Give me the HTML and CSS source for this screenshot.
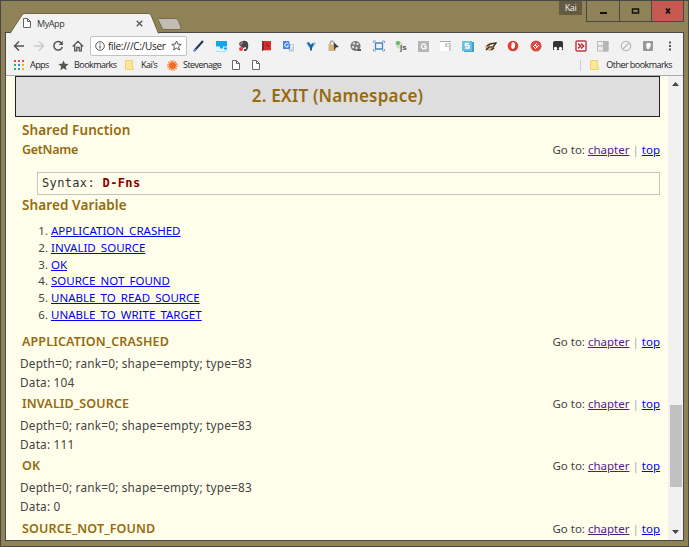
FILE: index.html
```html
<!DOCTYPE html>
<html lang="en">
<head>
<meta charset="utf-8">
<title>MyApp</title>
<link rel="stylesheet" href="styles.css">
</head>
<body>
<div class="window">
  <header class="titlebar">
    <svg class="tabshape" width="180" height="21" viewBox="0 0 180 21"><path d="M0 20.500L12 2Q13 .5 15 .5H138Q140 .5 141 2L148.500 20.500" fill="#f2f2f2" stroke="#6e6543"/><path d="M148 6.500Q148 5.500 149 5.500H165Q167 5.500 168 7L171 14Q171 16.500 169 16.500H155Q153 16.500 152 15Z" fill="#c1bdb2" stroke="#756c50"/></svg>
    <div class="tab">
      <svg width="8" height="10" viewBox="0 0 8 10"><path d="M.5.5H4.500L7.500 3.500V9.500H.5ZM4.500.5V3.500H7.500" fill="#fff" stroke="#666"/></svg>
      <span class="tabtext">MyApp</span>
      <svg class="close" width="7" height="7" viewBox="0 0 7 7"><path d="M.7.7L6.300 6.300M6.300.7L.7 6.300" stroke="#555" stroke-width="1.300"/></svg>
    </div>
    <span class="user">Kai</span>
    <div class="controls">
      <span><svg width="10" height="10"><path d="M2 7h7" stroke="#111" stroke-width="2"/></svg></span>
      <span><svg width="10" height="10"><rect x="2.500" y="3" width="6" height="4" fill="none" stroke="#111" stroke-width="1.500"/></svg></span>
      <span class="shut"><svg width="10" height="10"><path d="M3 2.500L7 7.500M7 2.500L3 7.500" stroke="#111" stroke-width="1.800"/></svg></span>
    </div>
  </header>
  <div class="inner">
    <div class="toolbar">
      <div class="nav">
        <svg viewBox="0 0 12 12"><path d="M11 6H2M6 1.500L1.500 6L6 10.500" fill="none" stroke="#555" stroke-width="1.500"/></svg>
        <svg viewBox="0 0 12 12"><path d="M1 6H10M6 1.500L10.500 6L6 10.500" fill="none" stroke="#ccc" stroke-width="1.500"/></svg>
        <svg viewBox="0 0 12 12"><path d="M9.600 3.200A4.300 4.300 0 1 0 10.300 7" fill="none" stroke="#555" stroke-width="1.500"/><path d="M10.800 .8V5H6.700Z" fill="#555"/></svg>
        <svg viewBox="0 0 12 12"><path d="M.7 6.500L6 1.300L11.300 6.500M2.700 5V10.800H4.800V7.500H7.200V10.800H9.300V5" fill="none" stroke="#555" stroke-width="1.300"/></svg>
      </div>
      <div class="address">
        <svg width="10" height="10" viewBox="0 0 10 10"><circle cx="5" cy="5" r="4.300" fill="none" stroke="#555"/><path d="M5 4.500V7.500M5 2.300V3.500" stroke="#555" stroke-width="1.200"/></svg>
        <span class="url">file:///C:/User</span>
        <svg width="11" height="11" viewBox="0 0 11 11"><path d="M5.500 1L6.800 4.100L10.200 4.400L7.600 6.600L8.400 9.900L5.500 8.100L2.600 9.900L3.400 6.600L.8 4.400L4.200 4.100Z" fill="none" stroke="#555"/></svg>
      </div>
      <div class="extensions">
        <svg viewBox="0 0 12 12"><path d="M1.500 10.500L10 1" stroke="#273050" stroke-width="2"/><path d="M0 11L4 9.500M1 11.500L2.500 9" stroke="#668ff0" stroke-width="1.300"/></svg>
        <svg viewBox="0 0 12 12"><path d="M0 1H11V11.500H0Z" fill="#12a6e8"/><path d="M0 6.500H4V8.500H7V6.500H11V7.500H8V9.500H11V11.500H0Z" fill="#dff6ff"/></svg>
        <svg viewBox="0 0 12 12"><path d="M1 3L4 1Q9 0 10 3Q11 9 8 11H6V9H8V7L5 8L1 5Z" fill="#4b4748"/><path d="M1 4H4V1" fill="none" stroke="#aaa"/><circle cx="3" cy="9" r="2" fill="#f13b40"/></svg>
        <svg viewBox="0 0 12 12"><path d="M1 1H10V11H1Z" fill="#d8302f"/><path d="M1 1H3V11H1Z" fill="#8b2726"/><path d="M2 10.500H10" stroke="#d8bcaa"/><path d="M5 7L6.500 3L8 7M5.500 5.700H7.500" stroke="#a22" fill="none"/></svg>
        <svg viewBox="0 0 12 12"><path d="M4 4H11V11.500H6Z" fill="#c5c9cf"/><path d="M0 1H6L8 9H0Z" fill="#4285e8"/><path d="M5.500 4A2 2 0 1 0 5.500 6H4M7 6H10M9 5Q9 8 7 9M7.500 7L10 9.500" stroke="#fff" fill="none"/></svg>
        <svg viewBox="0 0 12 12"><path d="M2 2.500L6 8L10 2.500" fill="none" stroke="#8dc4ee" stroke-width="2.500"/><path d="M3 2.500L6 7L8 3.500M6 5.500V10.500" fill="none" stroke="#1263a6" stroke-width="2"/></svg>
        <svg viewBox="0 0 12 12"><path d="M2 5V3Q4-1 6 3V5" fill="none" stroke="#aaa" stroke-width="1.500"/><rect x=".5" y="4.500" width="7" height="6.500" fill="#d4b27b"/><path d="M6 2.500L11 7L8 7.500L6 10.500Z" fill="#464038"/></svg>
        <svg viewBox="0 0 12 12"><circle cx="5.500" cy="6" r="5" fill="#777"/><path d="M8 9H11V11H7" fill="#555"/><g fill="#ddd"><circle cx="4" cy="3.500" r="1.200"/><circle cx="7.500" cy="4" r="1.200"/><circle cx="3" cy="7" r="1.200"/><circle cx="6.500" cy="8" r="1.200"/></g></svg>
        <svg viewBox="0 0 12 12"><path d="M2.500 3H9.500V9H2.500Z" fill="none" stroke="#4486bc" stroke-width="1.300"/><path d="M.5 3V1H3M9 1H11.500V3M.5 9V11H3M9 11H11.500V9" fill="none" stroke="#75a6cc"/></svg>
        <svg viewBox="0 0 12 12"><path d="M1 1L7 2L8 7L3 9L0 5Z" fill="#ccdcca"/><circle cx="3" cy="3" r="2" fill="#5abc56"/><text x="5" y="10" class="js">js</text></svg>
        <svg viewBox="0 0 12 12"><path d="M0 1H11V12H0Z" fill="#b6b6b6"/><path d="M8 4.500Q3.500 2.500 3.500 6.500Q4 10 8 8.500V6.500H6" fill="none" stroke="#fff" stroke-width="1.300"/></svg>
        <svg viewBox="0 0 12 12"><path d="M0 1H11V11H0Z" fill="#fff"/><path d="M0 1.500H11" stroke="#aaa"/><path d="M5 3H11V11H9V7H5Z" fill="#ccc"/><path d="M7 4H9V6H7Z" fill="#eee"/></svg>
        <svg viewBox="0 0 12 12"><path d="M2 2H12V12H2Z" fill="#4d9dbd"/><path d="M0 1H10V11H0Z" fill="#66bfe4"/><path d="M7 3.500H3.500V5.500H7V8H3" fill="none" stroke="#fff" stroke-width="1.500"/></svg>
        <svg viewBox="0 0 12 12"><path d="M0 6L4 3L11 2L9 9L5 11L1 10Z" fill="#d6b084"/><path d="M2 6L5 4L11 3L8 7L4 7L1 10M6 10L9 8" fill="none" stroke="#292722" stroke-width="1.200"/><path d="M5 6L8 5" stroke="#fff"/></svg>
        <svg viewBox="0 0 12 12"><circle cx="6" cy="6" r="5.300" fill="#e63a31"/><path d="M3.500 5.500L4.500 6.500V3H5.500V2H7V3H8V7L6.500 9H5Z" fill="#fff"/></svg>
        <svg viewBox="0 0 12 12"><circle cx="6" cy="6" r="5.500" fill="#da4b43"/><path d="M3 7L7 3M5 9L9 5M3.500 6.500L5.500 8.500M5 5L7.500 7" stroke="#fff"/></svg>
        <svg viewBox="0 0 12 12"><path d="M1 3Q1 1 3 1H9Q11 1 11 3V10H1Z" fill="#333"/><circle cx="3.500" cy="8.500" r="1.700" fill="#fff"/><circle cx="8.500" cy="8.500" r="1.700" fill="#fff"/></svg>
        <svg viewBox="0 0 12 12"><rect x="1" y="1" width="10" height="10" rx="1" fill="#fff" stroke="#c33b40" stroke-width="1.500"/><path d="M3 3.500L5.500 6L3 8.500M6 3.500L8.500 6L6 8.500" fill="none" stroke="#bd282f" stroke-width="1.600"/></svg>
        <svg viewBox="0 0 12 12"><path d="M.5 1.500H11V11H.5Z" fill="#eee" stroke="#bbb"/><path d="M6 1H11.500V11.500H6Z" fill="#b6b6b6"/><path d="M1 6H6" stroke="#aaa"/></svg>
        <svg viewBox="0 0 12 12"><circle cx="6" cy="6" r="4.700" fill="none" stroke="#bbb" stroke-width="1.300"/><path d="M3 9L9 3" stroke="#bbb" stroke-width="1.300"/></svg>
        <svg viewBox="0 0 12 12"><rect x="1" y="1" width="10" height="10" rx="1" fill="#999"/><path d="M4 5L5 3H8L9 5L7 9H5Z" fill="#fff"/></svg>
        <svg viewBox="0 0 12 12"><path d="M6 1.500V3.500M6 5V7M6 8.500V10.500" stroke="#555" stroke-width="2"/></svg>
      </div>
    </div>
    <div class="bookmarks">
      <svg class="apps" width="10" height="10" viewBox="0 0 10 10"><path d="M0 1H2M4 1H6M8 1H10" stroke="#e04b3f" stroke-width="2"/><path d="M0 5H2" stroke="#35a96a" stroke-width="2"/><path d="M4 5H6" stroke="#4285f4" stroke-width="2"/><path d="M8 5H10M8 9H10" stroke="#f0ac2d" stroke-width="2"/><path d="M0 9H2M4 9H6" stroke="#35a96a" stroke-width="2"/></svg>
      <span class="bm apps-label">Apps</span>
      <svg class="star" width="11" height="11" viewBox="0 0 11 11"><path d="M5.500 .5L6.900 3.800L10.600 4.100L7.800 6.600L8.700 10.200L5.500 8.300L2.300 10.200L3.200 6.600L.4 4.100L4.100 3.800Z" fill="#555"/></svg>
      <span class="bm marks-label">Bookmarks</span>
      <svg class="folder" width="9" height="10" viewBox="0 0 9 10"><path d="M.5.500H7.500V7.500H8.500V9.500H.5Z" fill="#ffe795" stroke="#efd16d"/></svg>
      <span class="bm kai-label">Kai's</span>
      <svg class="sun" width="11" height="11" viewBox="0 0 11 11"><circle cx="5.500" cy="5.500" r="4.500" fill="none" stroke="#f39352" stroke-width="1.800" stroke-dasharray="1.500 .8"/><circle cx="5.500" cy="5.500" r="3.500" fill="#f36c23"/></svg>
      <span class="bm stevenage-label">Stevenage</span>
      <svg class="page" width="8" height="10" viewBox="0 0 8 10"><path d="M.5.5H4.500L7.500 3.500V9.500H.5ZM4.500.5V3.500H7.500" fill="#fff" stroke="#666"/></svg>
      <svg class="page" width="8" height="10" viewBox="0 0 8 10"><path d="M.5.5H4.500L7.500 3.500V9.500H.5ZM4.500.5V3.500H7.500" fill="#fff" stroke="#666"/></svg>
      <span class="other"><svg width="9" height="10" viewBox="0 0 9 10"><path d="M.5.500H7.500V7.500H8.500V9.500H.5Z" fill="#ffe795" stroke="#efd16d"/></svg><span class="bm">Other bookmarks</span></span>
    </div>
    <div class="viewport">
      <main>
        <h1><span>2. EXIT (Namespace)</span></h1>
        <h2>Shared Function</h2>
        <div class="row first"><h3 class="getname">GetName</h3><p>Go to: <a class="visited" href="#">chapter</a> <i>|</i> <a href="#">top</a></p></div>
        <div class="syntax">Syntax: <b>D-Fns</b></div>
        <h2 class="variable">Shared Variable</h2>
        <ol>
          <li><a href="#">APPLICATION_CRASHED</a></li>
          <li><a href="#">INVALID_SOURCE</a></li>
          <li><a href="#">OK</a></li>
          <li><a href="#">SOURCE_NOT_FOUND</a></li>
          <li><a href="#">UNABLE_TO_READ_SOURCE</a></li>
          <li><a href="#">UNABLE_TO_WRITE_TARGET</a></li>
        </ol>
        <section><div class="row"><h3>APPLICATION_CRASHED</h3><p>Go to: <a class="visited" href="#">chapter</a> <i>|</i> <a href="#">top</a></p></div><div class="detail">Depth=0; rank=0; shape=empty; type=83</div><div class="detail">Data: 104</div></section>
        <section><div class="row"><h3>INVALID_SOURCE</h3><p>Go to: <a class="visited" href="#">chapter</a> <i>|</i> <a href="#">top</a></p></div><div class="detail">Depth=0; rank=0; shape=empty; type=83</div><div class="detail">Data: 111</div></section>
        <section><div class="row"><h3>OK</h3><p>Go to: <a class="visited" href="#">chapter</a> <i>|</i> <a href="#">top</a></p></div><div class="detail">Depth=0; rank=0; shape=empty; type=83</div><div class="detail">Data: 0</div></section>
        <section><div class="row"><h3>SOURCE_NOT_FOUND</h3><p>Go to: <a class="visited" href="#">chapter</a> <i>|</i> <a href="#">top</a></p></div></section>
      </main>
      <div class="scrollbar"><svg width="7" height="4"><path d="M0 4L3.500 0L7 4Z" fill="#444"/></svg><div class="thumb"></div><svg class="down" width="7" height="4"><path d="M0 0L3.500 4L7 0Z" fill="#444"/></svg></div>
    </div>
  </div>
</div>
</body>
</html>
```
FILE: styles.css
```css
* { box-sizing: border-box; }
body { margin: 0; overflow: hidden; }
h1, h2, h3, p, ol { margin: 0; padding: 0; }
svg { display: block; flex: none; }
.window { width: 689px; height: 547px; background: #8f8256; border: 1px solid #484848; padding: 0 4px 5px; font: 12px "Noto Sans", sans-serif; color: #444; display: flex; flex-direction: column; }
.titlebar { height: 31px; flex: none; position: relative; display: flex; }
.tabshape { position: absolute; left: 5px; top: 12px; z-index: 1; }
.tab { position: relative; z-index: 2; width: 140px; margin: 12px 0 0 18px; height: 20px; display: flex; align-items: center; font: 9px "Open Sans", sans-serif; color: #333; }
.tabtext { margin-left: 6px; width: 99px; letter-spacing: -.4px; }
.user { margin: 0 0 0 auto; width: 23px; height: 14px; background: #625b42; color: #eee; font: 9px/13px "Open Sans", sans-serif; letter-spacing: -.4px; text-align: center; }
.controls { display: flex; margin-left: 4px; height: 21px; border: 1px solid #484848; border-top: 0; width: 98px; }
.controls span { width: 33px; border-right: 1px solid #484848; display: flex; align-items: center; justify-content: center; }
.controls .shut { background: #c75a50; border-right: 0; width: 31px; }
.inner { flex: 1; min-height: 0; border: 1px solid #484848; display: flex; flex-direction: column; background: #f2f2f2; }
.toolbar { height: 25px; flex: none; display: flex; align-items: center; }
.nav { width: 84px; display: flex; gap: 7.700px; padding-left: 7px; }
.nav svg { width: 12px; height: 12px; }
.address { height: 20px; width: 97px; background: #fff; border: 1px solid #c2c2c2; border-radius: 2px; display: flex; align-items: center; gap: 3px; padding: 0 4px; }
.url { width: 61px; font: 10px "Open Sans", sans-serif; letter-spacing: -.3px; white-space: nowrap; color: #222; }
.extensions { display: flex; width: 494px; margin-left: 1px; }
.extensions svg { width: 12px; height: 12px; margin: 0 5.220px; }
.js { font: bold 8px "Liberation Sans", sans-serif; fill: #555; }
.bookmarks { height: 17px; flex: none; display: flex; align-items: center; padding: 0 0 3px 8px; }
.bm { font: 9px/12px "Open Sans", sans-serif; letter-spacing: -.55px; color: #222; white-space: nowrap; }
.apps-label { margin-left: 6px; width: 28px; }
.marks-label { margin-left: 5px; width: 51px; }
.kai-label { margin-left: 7px; width: 26px; }
.sun { margin-right: 5px; }
.stevenage-label { width: 49px; }
.page { margin-right: 11.500px; }
.other { margin: 0 11px 0 auto; display: flex; align-items: center; gap: 7px; padding-left: 9px; border-left: 1px solid #ccc; height: 11px; }
.viewport { display: flex; flex: 1; min-height: 0; background: #fffeeb; border-top: 1px solid #aaa; }
main { width: 662px; overflow: hidden; padding: 0 8px 0 9px; }
h1 { height: 41px; border: 1px solid #222; background: #dedede; color: #956b11; font: 600 17px/38px "Noto Sans", sans-serif; letter-spacing: .2px; text-align: center; white-space: nowrap; }
h2 { margin: 4px 0 0 7px; font: 600 13.500px/19px "Noto Sans", sans-serif; letter-spacing: .1px; color: #956b11; white-space: nowrap; }
h3 { font: 600 12.500px/19px "Noto Sans", sans-serif; letter-spacing: .14px; color: #956b11; white-space: nowrap; }
h3.getname { letter-spacing: -.3px; }
.row { display: flex; justify-content: space-between; height: 19px; margin-left: 7px; line-height: 19px; }
.row p { font-size: 11.500px; white-space: nowrap; }
a { color: #00e; text-decoration: underline; }
.visited { color: #551a8b; }
i { font-style: normal; color: #a3adb0; }
.syntax { margin: 13px 0 0 22px; height: 23px; border: 1px solid #c5c5c5; padding-left: 4px; font: 12px/21px "DejaVu Sans Mono", monospace; letter-spacing: .35px; color: #333; white-space: nowrap; }
.syntax b { color: #8b0000; }
h2.variable { margin-top: 1px; }
ol { margin: 8px 0 0 36px; font-size: 11.500px; line-height: 16.800px; white-space: nowrap; }
section { height: 62.300px; }
ol + section { margin-top: 8px; }
.detail { margin-left: 5px; font-size: 11.800px; line-height: 19px; letter-spacing: .2px; white-space: nowrap; position: relative; top: 3px; }
.scrollbar { width: 15px; background: #f1f1f1; display: flex; flex-direction: column; align-items: center; padding-top: 6px; }
.thumb { width: 12px; height: 82px; background: #c1c1c1; margin-top: 319px; }
.down { margin-top: 43px; }
```
